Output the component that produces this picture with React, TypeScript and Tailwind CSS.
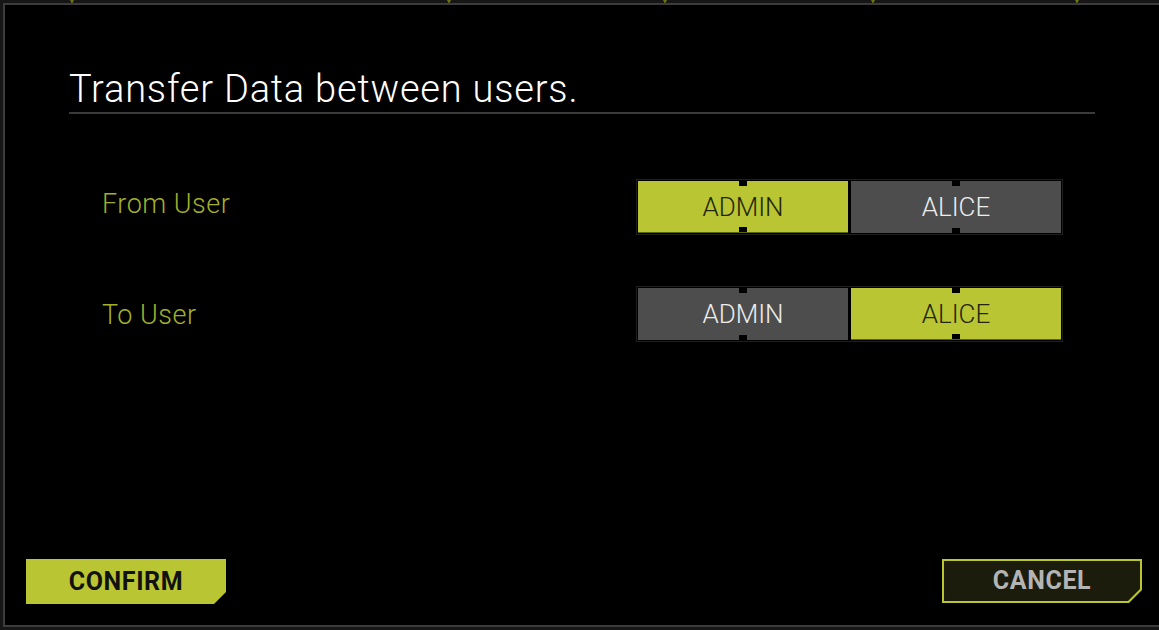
import React from "react";

const font = { fontFamily: "Roboto, 'Liberation Sans', sans-serif" };

function Seg({ active }: { active: 0 | 1 }) {
  const items = ["ADMIN", "ALICE"];
  return (
    <div className="flex gap-[3px] p-[1px] border border-[#1f1f1f]">
      {items.map((t, i) => {
        const on = i === active;
        return (
          <div
            key={t}
            className={
              "relative w-[210px] h-[52px] flex items-center justify-center text-[26px] font-light " +
              (on ? "bg-[#b9c532] text-[#23250a] border-b border-[#5c6418]" : "bg-[#4d4d4d] text-[#ececec]")
            }
          >
            <span className="absolute top-0 left-[101px] w-[8px] h-[5px] bg-black" />
            <span className="absolute bottom-0 left-[101px] w-[8px] h-[5px] bg-black" />
            <span className="mt-[1px]">{t}</span>
          </div>
        );
      })}
    </div>
  );
}

export default function App() {
  const marks = [72, 449, 665, 873, 1077];
  return (
    <div className="relative w-[1159px] h-[630px] bg-[#161616] overflow-hidden" style={font}>
      {marks.map((x) => (
        <span
          key={x}
          className="absolute top-0 w-0 h-0 border-l-[2px] border-r-[2px] border-t-[4px] border-l-transparent border-r-transparent border-t-[#6b7318]"
          style={{ left: x - 2 }}
        />
      ))}
      <div className="absolute left-[3px] top-[3px] w-[1160px] h-[624px] border-2 border-r-0 border-[#3c3c3c] bg-black flex flex-col">
        <div className="ml-[64px] mt-[62px] w-[1026px] border-b-2 border-[#3a3a3a] pb-[1px]">
          <div className="text-[38px] leading-[44px] font-light text-white tracking-[0.8px]">
            Transfer Data between users.
          </div>
        </div>
        <div className="ml-[97px] mt-[65px] w-[961px] flex items-center justify-between">
          <div className="text-[27px] font-light text-[#a3af2a] tracking-[0.5px] -mt-[5px]">From User</div>
          <Seg active={0} />
        </div>
        <div className="ml-[97px] mt-[51px] w-[961px] flex items-center justify-between">
          <div className="text-[27px] font-light text-[#a3af2a] tracking-[0.5px] mt-[2px]">To User</div>
          <Seg active={1} />
        </div>
        <div className="mt-auto mb-[21px] ml-[21px] mr-[21px] flex justify-between">
          <button className="w-[200px] h-[45px] bg-[#b9c532] text-[#111] text-[25px] font-bold tracking-[0.6px] flex items-center justify-center [clip-path:polygon(0_0,100%_0,100%_calc(100%-12px),calc(100%-12px)_100%,0_100%)]">
            CONFIRM
          </button>
          <div className="w-[200px] h-[44px] bg-[#b9c532] p-[2px] [clip-path:polygon(0_0,100%_0,100%_calc(100%-13px),calc(100%-13px)_100%,0_100%)]">
            <div className="w-full h-full bg-[#1b1c0b] text-[#b4b4b4] text-[25px] font-bold tracking-[0.6px] flex items-center justify-center [clip-path:polygon(0_0,100%_0,100%_calc(100%-12px),calc(100%-12px)_100%,0_100%)]">
              CANCEL
            </div>
          </div>
        </div>
      </div>
    </div>
  );
}
